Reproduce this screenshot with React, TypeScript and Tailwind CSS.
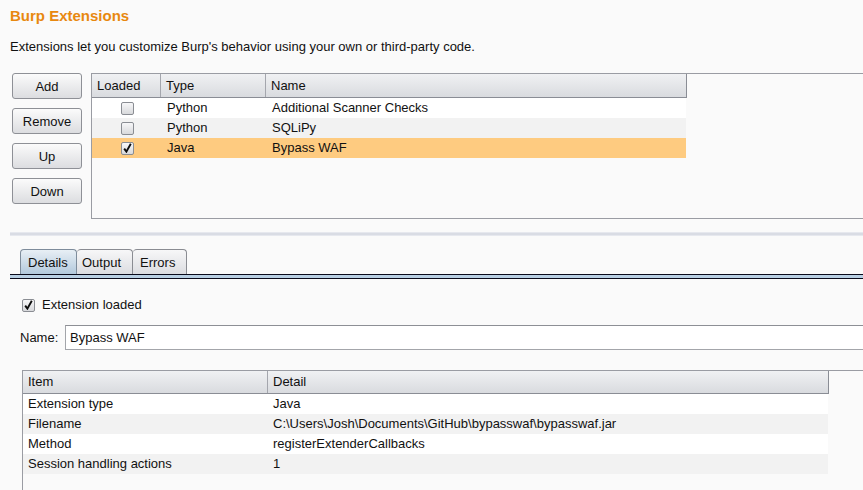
const Check = ({ checked }: { checked: boolean }) => (
  <span className="inline-flex h-[13px] w-[13px] shrink-0 items-center justify-center rounded-[2px] border border-[#8a8d93] bg-linear-to-b from-[#f7f7f8] to-[#d8d9dc]">
    {checked && (
      <svg width="9" height="10" viewBox="0 0 9 10">
        <path d="M1.2 5.6 L3.4 8.6 L7.8 0.8" stroke="#0d0d0d" strokeWidth="1.9" fill="none" />
      </svg>
    )}
  </span>
);

const Button = ({ label }: { label: string }) => (
  <div className="flex h-[26px] w-[70px] items-center justify-center rounded-[3px] border border-[#8e9096] bg-linear-to-b from-[#fbfbfb] to-[#dcdde0] pt-[1px] text-[13px] text-[#111]">
    {label}
  </div>
);

const extensions = [
  { loaded: false, type: "Python", name: "Additional Scanner Checks", bg: "bg-white" },
  { loaded: false, type: "Python", name: "SQLiPy", bg: "bg-[#f2f2f2]" },
  { loaded: true, type: "Java", name: "Bypass WAF", bg: "bg-[#fecb80]" },
];

const details = [
  ["Extension type", "Java", "bg-white"],
  ["Filename", "C:\\Users\\Josh\\Documents\\GitHub\\bypasswaf\\bypasswaf.jar", "bg-[#f2f2f2]"],
  ["Method", "registerExtenderCallbacks", "bg-white"],
  ["Session handling actions", "1", "bg-[#f2f2f2]"],
];

export default function App() {
  return (
    <div className="h-[490px] w-[863px] overflow-hidden bg-[#fafafa] font-['Liberation_Sans',Arial,sans-serif] text-[13px] text-[#111]">
      <div className="ml-[10px] mt-[7px] h-[18px] text-[15px] font-bold leading-[18px] text-[#e8880f]">Burp Extensions</div>
      <div className="ml-[10px] mt-[14px] h-[16px] leading-[16px]">
        Extensions let you customize Burp's behavior using your own or third-party code.
      </div>

      <div className="mt-[18px] flex">
        <div className="ml-[12px] flex flex-col gap-[9px]">
          <Button label="Add" />
          <Button label="Remove" />
          <Button label="Up" />
          <Button label="Down" />
        </div>
        <div className="ml-[9px] h-[146px] flex-1 border-y border-l border-[#9a9ca3]">
          <div className="flex h-[24px] w-[595px] border-b border-r border-[#8a8d95] bg-linear-to-b from-[#f0f1f3] to-[#d9dbdf] leading-[23px]">
            <div className="w-[69px] border-r border-[#a4a6ad] pl-[5px]">Loaded</div>
            <div className="w-[105px] border-r border-[#a4a6ad] pl-[5px]">Type</div>
            <div className="flex-1 pl-[5px]">Name</div>
          </div>
          {extensions.map((e) => (
            <div key={e.name} className={`flex h-[20px] w-[594px] items-center leading-[20px] ${e.bg}`}>
              <div className="flex w-[69px] justify-center pl-[2px]">
                <Check checked={e.loaded} />
              </div>
              <div className="w-[105px] pl-[6px]">{e.type}</div>
              <div className="flex-1 pl-[6px]">{e.name}</div>
            </div>
          ))}
        </div>
      </div>

      <div className="ml-[10px] mt-[13px] h-[4px] border-y border-[#e6e8ee] bg-[#d9dce4]" />

      <div className="ml-[10px] mt-[13px]">
        <div className="flex h-[25px] pl-[10px]">
          <div className="flex w-[57px] items-center rounded-t-[4px] border border-b-0 border-[#7e8c9b] bg-linear-to-b from-[#e8eff5] to-[#b3c9dc] pl-[7px] pt-[1px]">
            Details
          </div>
          <div className="flex w-[56px] items-center rounded-t-[4px] border border-b-0 border-l-0 border-[#8a8c92] bg-linear-to-b from-[#f7f7f8] to-[#dcdde1] pl-[5px] pt-[1px]">
            Output
          </div>
          <div className="flex w-[54px] items-center rounded-t-[4px] border border-b-0 border-l-0 border-[#8a8c92] bg-linear-to-b from-[#f7f7f8] to-[#dcdde1] pl-[7px] pt-[1px]">
            Errors
          </div>
        </div>
        <div className="h-[5px] border-y border-[#0a0b1c] bg-[#b9d0e4]" />
      </div>

      <div className="ml-[22px] mt-[19px] flex h-[14px] items-center gap-[7px]">
        <Check checked={true} />
        <span className="leading-[14px]">Extension loaded</span>
      </div>

      <div className="ml-[20px] mt-[13px] flex h-[25px] items-center">
        <span className="w-[45px]">Name:</span>
        <div className="flex h-[25px] flex-1 items-center border border-r-0 border-[#a3a5aa] border-t-[#8d8f95] bg-white pl-[4px]">
          Bypass WAF
        </div>
      </div>

      <div className="ml-[22px] mt-[20px] h-[130px] border-l border-t border-[#9a9ca3]">
        <div className="flex h-[23px] w-[806px] border-b border-r border-[#8a8d95] bg-linear-to-b from-[#f0f1f3] to-[#d9dbdf] leading-[22px]">
          <div className="w-[245px] border-r border-[#a4a6ad] pl-[5px]">Item</div>
          <div className="flex-1 pl-[5px]">Detail</div>
        </div>
        {details.map(([k, v, bg]) => (
          <div key={k} className={`flex h-[20px] w-[805px] leading-[20px] ${bg}`}>
            <div className="w-[245px] pl-[5px]">{k}</div>
            <div className="flex-1 pl-[5px]">{v}</div>
          </div>
        ))}
      </div>
    </div>
  );
}
